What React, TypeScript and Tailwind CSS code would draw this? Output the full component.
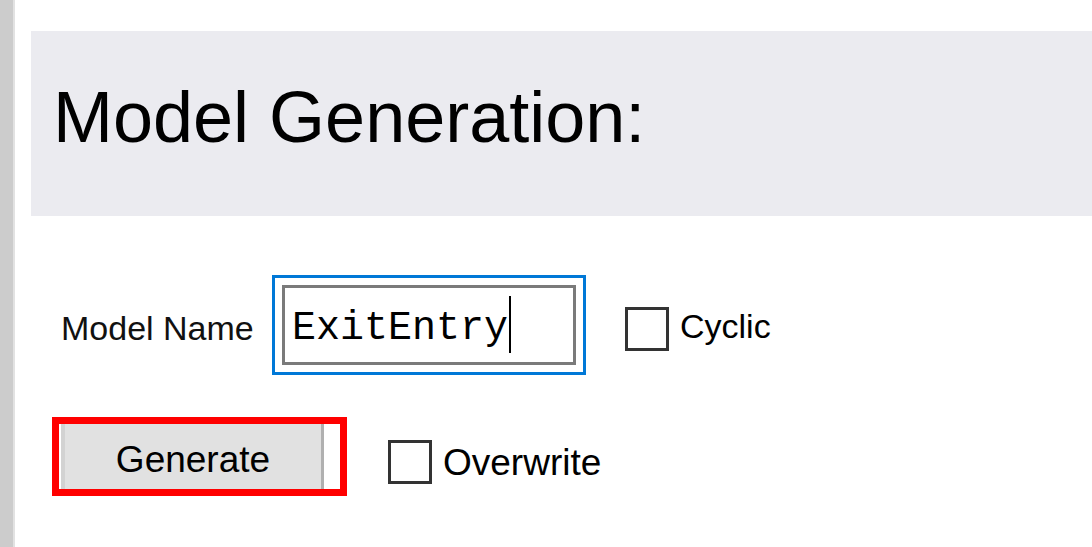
import React from "react";

const sans = { fontFamily: '"Liberation Sans", Arial, sans-serif' };

function CheckBox({ label, size, textTop }: { label: string; size: string; textTop: string }) {
  return (
    <label className="flex items-start gap-[11px]">
      <span className="block h-[44px] w-[44px] border-[3px] border-[#333333] bg-white" />
      <span className={`${size} ${textTop} leading-none text-black`} style={sans}>
        {label}
      </span>
    </label>
  );
}

export default function App() {
  return (
    <div className="flex h-[547px] w-full overflow-hidden bg-white">
      <div className="w-[13px] shrink-0 border-r-2 border-[#e2e2e2] bg-[#cccccc] box-content" />

      <div className="flex-1 pl-[16px] pt-[31px]">
        <div className="h-[185px] bg-[#ebebf0] pl-[22px] pt-[50px]">
          <h1 className="text-[72px] font-normal leading-none text-black" style={sans}>
            Model Generation:
          </h1>
        </div>

        <div className="mt-[59px] flex items-start">
          <span
            className="ml-[30px] mt-[36px] w-[211px] text-[34px] leading-none text-[#111111]"
            style={sans}
          >
            Model Name
          </span>
          <div className="h-[100px] w-[314px] border-[3px] border-[#0078d7] bg-white p-[7px]">
            <div className="flex h-full border-[3px] border-[#7a7a7a] pl-[7px]">
              <span
                className="mt-[21px] text-[40px] leading-none text-black"
                style={{ fontFamily: '"Liberation Mono", "Courier New", monospace' }}
              >
                ExitEntry
              </span>
              <span className="ml-[1px] mt-[8px] block h-[57px] w-[2px] bg-black" />
            </div>
          </div>
          <div className="ml-[39px] mt-[32px]">
            <CheckBox label="Cyclic" size="text-[34px]" textTop="mt-[2px]" />
          </div>
        </div>

        <div className="mt-[42px] flex items-start">
          <div className="ml-[21px] flex h-[79px] w-[295px] border-[7px] border-[#ff0000] pl-[2px] pr-[16px]">
            <button
              type="button"
              className="flex h-full w-[263px] items-center justify-center border-l-[4px] border-r-[3px] border-l-[#d2d2d2] border-r-[#b0b0b0] bg-[#e1e1e1] pt-[5px] text-[37px] leading-none text-black"
              style={sans}
            >
              Generate
            </button>
          </div>
          <div className="ml-[41px] mt-[23px]">
            <CheckBox label="Overwrite" size="text-[37px]" textTop="mt-[4px]" />
          </div>
        </div>
      </div>
    </div>
  );
}
